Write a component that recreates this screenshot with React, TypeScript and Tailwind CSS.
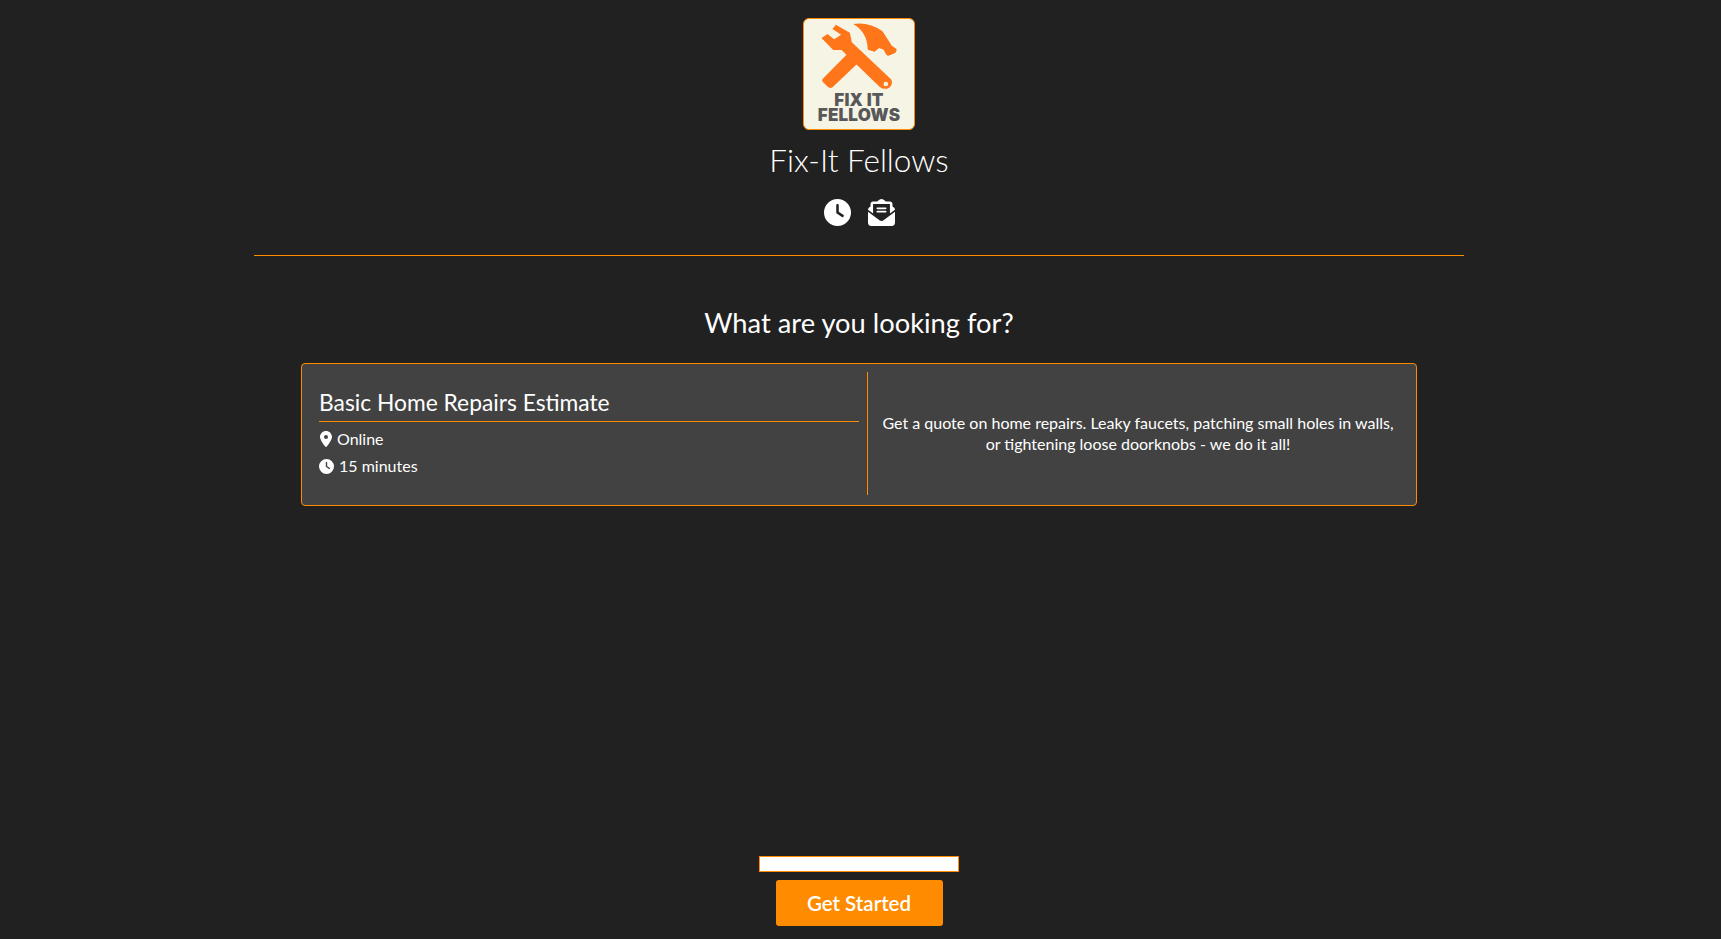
import { FaClock, FaEnvelopeOpenText, FaLocationDot } from "react-icons/fa6";

function Logo() {
  return (
    <div className="w-[112px] h-[112px] rounded-[6px] border border-[#ff8c00] bg-[#f6f4e4] overflow-hidden flex flex-col items-center">
      <svg viewBox="73 58 329 219" className="w-[110px] h-[73px] shrink-0">
        <path
          fill="#ff7519"
          d="M128 238 L215 150 L245 180 L158 263 Q150 268 142 260 L130 248 Q125 243 128 238 Z"
        />
        <path
          fill="#ff7519"
          d="M220 73 Q268 66 308 95 L336 138 L350 148 Q352 154 346 160 L326 168 Q318 168 312 150 L298 145 L284 156 L264 150 Q262 96 220 73 Z"
        />
        <path
          fill="#ff7519"
          d="M168 75 L210 99 L216 128 L335 240 Q340 254 328 264 Q314 272 300 262 L185 151 L160 151 L125 115 L143 103 L163 119 L184 105 L158 88 Z"
        />
        <circle cx="318" cy="253" r="7" fill="#f6f4e4" />
      </svg>
      <div className="mt-[1px] text-[#58585a] text-[17px] leading-[15px] font-black tracking-[0.2px] text-center font-['Inter',sans-serif]">
        FIX IT
        <br />
        FELLOWS
      </div>
    </div>
  );
}

export default function App() {
  return (
    <div className="h-[939px] bg-[#212121] text-white pr-[3px] flex flex-col items-center font-['Lato','Noto_Sans',sans-serif] overflow-hidden">
      <div className="pt-[18px] flex flex-col items-center w-[1210px] border-b border-[#ff8c00] pb-[29px] shrink-0">
        <Logo />
        <h1 className="mt-[11px] text-[31.5px] leading-[38px] font-light">Fix-It Fellows</h1>
        <div className="mt-[19px] flex items-center gap-[17px] h-[28px]">
          <FaClock className="w-[27px] h-[27px]" />
          <FaEnvelopeOpenText className="w-[27px] h-[27px]" />
        </div>
      </div>
      <h2 className="mt-[49px] text-[27.3px] leading-[36px] font-normal">What are you looking for?</h2>
      <div className="mt-[22px] w-[1116px] h-[143px] shrink-0 rounded-[4px] border border-[#ff8c00] bg-[#424242] flex items-stretch pt-[8px] pb-[10px] pl-[17px] pr-[8px]">
        <div className="w-[540px] shrink-0 flex flex-col pt-[14px]">
          <div className="text-[22.8px] leading-[32px] pb-[3px] border-b border-[#ff8c00]">Basic Home Repairs Estimate</div>
          <div className="mt-[6px] flex items-center gap-[4px] text-[16px] leading-[22px]">
            <FaLocationDot className="w-[14px] h-[16px]" />
            <span>Online</span>
          </div>
          <div className="mt-[5px] flex items-center gap-[5px] text-[16px] leading-[22px]">
            <FaClock className="w-[15px] h-[15px]" />
            <span>15 minutes</span>
          </div>
        </div>
        <div className="ml-[8px] w-[550px] border-l border-[#ff8c00] flex items-center justify-center text-center text-[16px] leading-[21px] px-[12px] pb-[2px]">
          <p className="max-w-[520px]">Get a quote on home repairs. Leaky faucets, patching small holes in walls, or tightening loose doorknobs - we do it all!</p>
        </div>
      </div>
      <div className="mt-auto flex flex-col items-center gap-[8px] pb-[13px]">
        <input className="w-[200px] h-[16px] bg-white border border-[#ff8c00] block" />
        <button className="w-[167px] h-[46px] rounded-[3px] bg-[#ff8c00] text-white text-[20.5px] font-semibold">Get Started</button>
      </div>
    </div>
  );
}
